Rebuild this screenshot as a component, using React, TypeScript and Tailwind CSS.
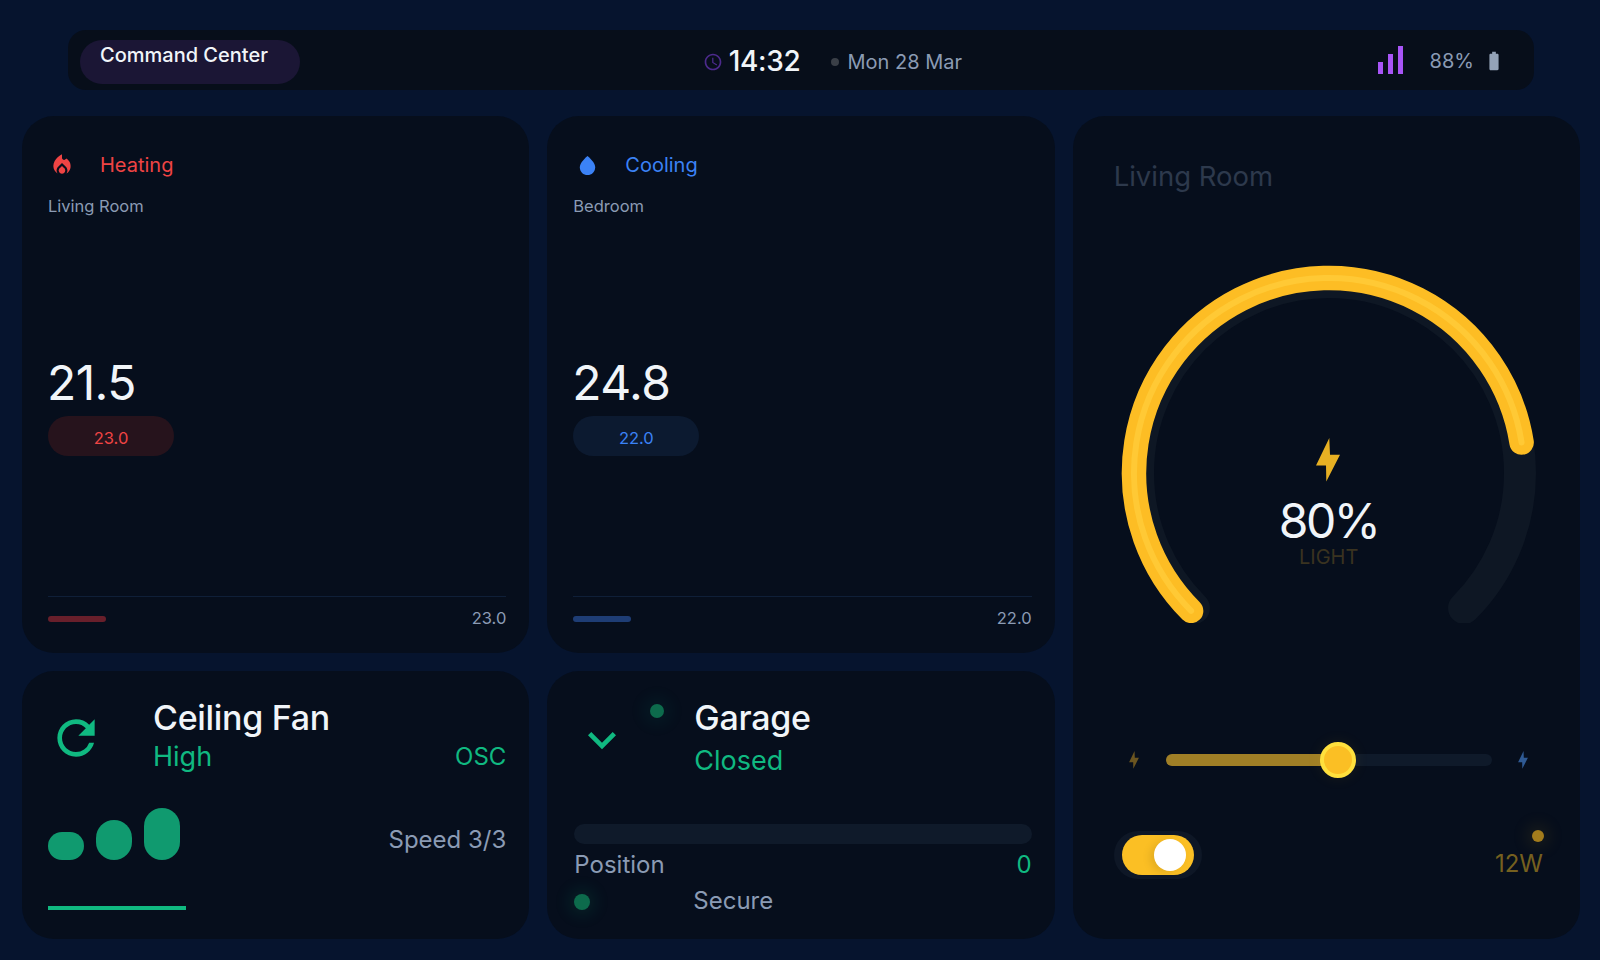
import React from "react";
import { MdLocalFireDepartment, MdRefresh, MdKeyboardArrowDown, MdAccessTime, MdBatteryFull } from "react-icons/md";

function Bolt({ className }: { className: string }) {
  return (
    <svg viewBox="0 0 24 44" className={className} fill="currentColor">
      <polygon points="13.3,0 0,27.4 10,27.4 10.3,43.4 24,16.7 14,16.7" />
    </svg>
  );
}

function Drop() {
  return (
    <svg viewBox="0 0 24 24" width="23" height="23" fill="#3b82f6">
      <path d="M12 2c-5.33 4.55-8 8.48-8 11.8 0 4.98 3.8 8.2 8 8.2s8-3.22 8-8.2c0-3.32-2.67-7.25-8-11.8z" />
    </svg>
  );
}

function ClimateCard(props: {
  icon: React.ReactNode; mode: string; room: string; temp: string; target: string;
  text: string; pill: string; bar: string;
}) {
  return (
    <div className="flex flex-col rounded-[32px] bg-[#060e1c] pl-[26px] pr-[23px] pt-[26px] pb-[24px]">
      <div className="flex h-[46px] items-center">
        <div className="flex w-[52px] items-center justify-center pr-[24px]">{props.icon}</div>
        <span className={`text-[20px] leading-[28px] ${props.text}`}>{props.mode}</span>
      </div>
      <div className="mt-[6px] text-[16.5px] leading-[24px] text-[#8b9bb4]">{props.room}</div>
      <div className="flex flex-1 flex-col items-start justify-center pb-[2px]">
        <div className="ml-[-1px] text-[48px] leading-[56px] font-normal tracking-[-0.6px] text-[#f1f5f9]">{props.temp}</div>
        <div className={`mt-[5px] flex h-[40px] w-[126px] items-center justify-center rounded-full pt-[4px] text-[16.5px] ${props.pill} ${props.text}`}>
          {props.target}
        </div>
      </div>
      <div className="flex items-center justify-between border-t border-[#0f1f38] pt-[11px] pb-[1px]">
        <div className={`mt-[2px] h-[6px] w-[58px] rounded-full ${props.bar}`} />
        <span className="text-[16.5px] leading-[20px] text-[#8b9bb4]">{props.target}</span>
      </div>
    </div>
  );
}

function Gauge() {
  const cx = 210, cy = 210;
  const pt = (r: number, deg: number) => {
    const a = (deg * Math.PI) / 180;
    return [cx + r * Math.sin(a), cy - r * Math.cos(a)];
  };
  const arc = (r: number, from: number, to: number) => {
    const [x1, y1] = pt(r, from);
    const [x2, y2] = pt(r, to);
    const large = to - from > 180 ? 1 : 0;
    return `M ${x1} ${y1} A ${r} ${r} 0 ${large} 1 ${x2} ${y2}`;
  };
  return (
    <div className="relative mt-[71px] ml-[5px] h-[360px] w-[420px]">
      <svg width="420" height="360" viewBox="0 0 420 360">
        <path d={arc(191, 225, 495)} fill="none" stroke="#0e1724" strokeWidth="32" strokeLinecap="round" />
        <path d={arc(195, 225, 441)} fill="none" stroke="#fdbd24" strokeWidth="24.5" strokeLinecap="round" />
        <path d={arc(195, 225, 441)} fill="none" stroke="#ffc935" strokeWidth="6" strokeLinecap="round" />
      </svg>
      <div className="absolute top-[175px] left-0 flex w-[420px] flex-col items-center">
        <Bolt className="ml-[-1px] h-[44px] w-[24px] text-[#e7b023]" />
        <div className="mt-[15px] text-[48px] leading-[48px] tracking-[-2.5px] text-[#f1f5f9]">80%</div>
        <div className="text-[20px] leading-[24px] text-[#3a3320]">LIGHT</div>
      </div>
    </div>
  );
}

export default function App() {
  return (
    <div className="flex h-[960px] w-[1600px] flex-col bg-[#06142e] pl-[22px] pr-[20px] pt-[30px] pb-[21px] font-['Inter',sans-serif]">
      <header className="ml-[46px] mr-[46px] flex h-[60px] shrink-0 items-center justify-between rounded-[18px] bg-[#070e1a] pl-[12px] pr-[29px]">
        <div className="mt-[4px] h-[44px] w-[220px] rounded-full bg-[#1b1635] pl-[20px] pt-[1px] text-[20px] leading-[28px] font-medium text-[#f1f5f9]">
          Command Center
        </div>
        <div className="mr-[13px] flex items-center">
          <MdAccessTime className="mt-[3px] text-[#4c2a8c]" size={20} />
          <span className="ml-[6px] mt-[1px] text-[28px] leading-[36px] font-medium tracking-[-0.3px] text-[#f1f5f9]">14:32</span>
          <span className="ml-[31px] mt-[3px] h-[8px] w-[8px] rounded-full bg-[#3a3f47]" />
          <span className="ml-[8px] mt-[3px] text-[20px] leading-[28px] text-[#8b9bb4]">Mon 28 Mar</span>
        </div>
        <div className="flex items-center justify-end">
          <div className="flex items-end gap-[5px]">
            <div className="h-[12px] w-[5px] bg-[#a855f7]" />
            <div className="h-[20px] w-[5px] bg-[#a855f7]" />
            <div className="h-[28px] w-[5px] bg-[#a855f7]" />
          </div>
          <span className="ml-[27px] mt-[2px] text-[20px] leading-[28px] text-[#8b9bb4]">88%</span>
          <MdBatteryFull className="ml-[9px] mt-[2px] text-[#94a3b8]" size={22} />
        </div>
      </header>

      <main className="mt-[26px] grid flex-1 grid-cols-3 grid-rows-[2fr_1fr] gap-[18px]">
        <ClimateCard
          icon={<MdLocalFireDepartment size={26} className="text-[#ef4444]" />}
          mode="Heating" room="Living Room" temp="21.5" target="23.0"
          text="text-[#ef4444]" pill="bg-[#26131c]" bar="bg-[#681f2b]"
        />
        <ClimateCard
          icon={<Drop />}
          mode="Cooling" room="Bedroom" temp="24.8" target="22.0"
          text="text-[#3b82f6]" pill="bg-[#0c1a30]" bar="bg-[#1e3d75]"
        />

        <section className="row-span-2 flex flex-col rounded-[32px] bg-[#060e1c] pl-[41px] pr-[37px] pt-[44px]">
          <div className="text-[27.5px] leading-[32px] text-[#2d394c]">Living Room</div>
          <Gauge />
          <div className="mt-[128px] flex items-center pl-[15px]">
            <Bolt className="h-[18px] w-[10px] text-[#6b5520]" />
            <div className="relative ml-[27px] h-[12px] w-[326px] rounded-full bg-[#0f1a2a]">
              <div className="h-[12px] w-[172px] rounded-full bg-[#a07f26]" />
              <div className="absolute top-[-12px] left-[154px] h-[36px] w-[36px] rounded-full border-[4px] border-[#ffe03d] bg-[#fbbf24] shadow-[0_0_16px_rgba(251,191,36,0.08)]" />
            </div>
            <Bolt className="ml-[26px] h-[18px] w-[10px] text-[#2f5a94]" />
          </div>
          <div className="mt-[62px] flex items-start justify-between">
            <div className="flex h-[48px] w-[88px] items-center justify-center rounded-full bg-[#0e1726]">
              <div className="flex h-[40px] w-[72px] items-center justify-end rounded-full bg-[#fbbf24] pr-[8px]">
                <div className="h-[32px] w-[32px] rounded-full bg-white shadow-[-4px_2px_8px_rgba(0,0,0,0.1)]" />
              </div>
            </div>
            <div className="mt-[-1px] flex flex-col items-end">
              <div className="mr-[-1px] h-[12px] w-[12px] rounded-full bg-[#a37c1c] shadow-[0_0_16px_6px_rgba(163,124,28,0.12)]" />
              <div className="mt-[6px] text-[24px] leading-[32px] text-[#75601f]">12W</div>
            </div>
          </div>
        </section>

        <section className="flex flex-col rounded-[32px] bg-[#060e1c] pl-[26px] pr-[23px] pt-[26px]">
          <div className="flex">
            <div className="flex w-[105px] items-center">
              <MdRefresh size={56} className="mt-[4px] text-[#10b981]" />
            </div>
            <div className="flex-1">
              <div className="mt-[1px] text-[34px] leading-[40px] font-medium tracking-[-0.3px] text-[#f1f5f9]">Ceiling Fan</div>
              <div className="flex items-center justify-between">
                <span className="text-[27px] leading-[38px] text-[#10b981]">High</span>
                <span className="text-[24px] leading-[38px] text-[#10b981]">OSC</span>
              </div>
            </div>
          </div>
          <div className="mt-[32px] flex items-end justify-between">
            <div className="flex items-end gap-[12px]">
              <div className="h-[28px] w-[36px] rounded-[18px] bg-[#109a6f]" />
              <div className="h-[40px] w-[36px] rounded-[18px] bg-[#109a6f]" />
              <div className="h-[52px] w-[36px] rounded-[18px] bg-[#109a6f]" />
            </div>
            <span className="mb-[4px] text-[24px] leading-[32px] text-[#8b9bb4]">Speed 3/3</span>
          </div>
          <div className="mt-[46px] h-[4px] w-[138px] bg-[#10b981]" />
        </section>

        <section className="flex flex-col rounded-[32px] bg-[#060e1c] pl-[27px] pr-[23px] pt-[26px]">
          <div className="flex">
            <div className="relative w-[120px]">
              <MdKeyboardArrowDown size={56} className="absolute top-[15px] left-[0px] text-[#10b981]" />
              <div className="absolute top-[7px] left-[76px] h-[14px] w-[14px] rounded-full bg-[#0d6b4c] shadow-[0_0_16px_8px_rgba(16,185,129,0.06)]" />
            </div>
            <div>
              <div className="mt-[1px] text-[34px] leading-[40px] font-medium tracking-[-0.3px] text-[#f1f5f9]">Garage</div>
              <div className="mt-[4px] text-[27px] leading-[38px] text-[#10b981]">Closed</div>
            </div>
          </div>
          <div className="mt-[44px] h-[20px] w-full rounded-full bg-[#0f1a2a]" />
          <div className="mt-[5px] flex justify-between text-[24px] leading-[32px]">
            <span className="text-[#8b9bb4]">Position</span>
            <span className="text-[#10b981]">0</span>
          </div>
          <div className="mt-[4px] flex items-center">
            <div className="w-[119px]">
              <div className="mt-[2px] h-[16px] w-[16px] rounded-full bg-[#0d6b4c] shadow-[0_0_16px_6px_rgba(16,185,129,0.1)]" />
            </div>
            <span className="text-[24px] leading-[32px] text-[#8b9bb4]">Secure</span>
          </div>
        </section>
      </main>
    </div>
  );
}
